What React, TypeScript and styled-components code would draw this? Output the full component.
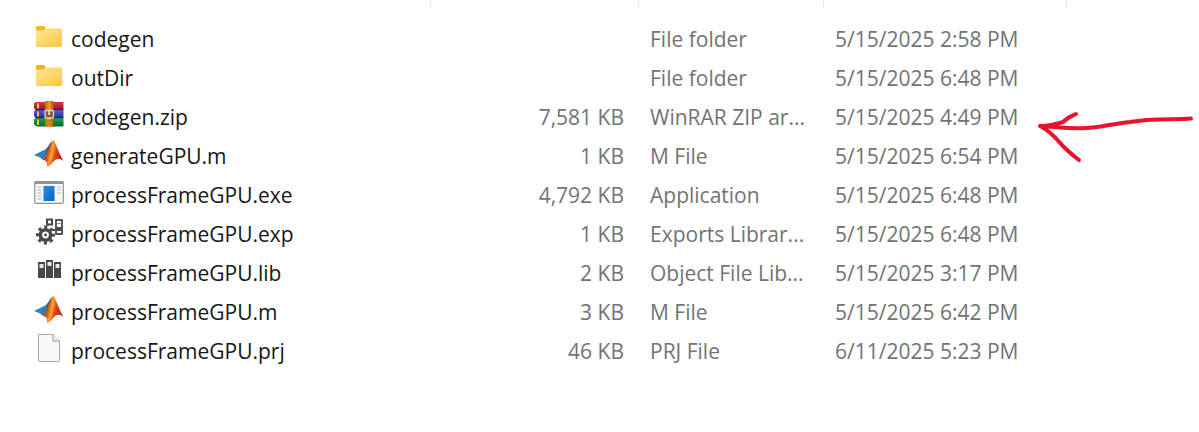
import React from "react";
import styled, { createGlobalStyle } from "styled-components";

const GlobalStyle = createGlobalStyle`
  body {
    margin: 0;
    background: #ffffff;
    font-family: "Open Sans", "Noto Sans", sans-serif;
  }
`;

const Pane = styled.main`
  position: relative;
  padding-bottom: 60px;
  overflow: hidden;
`;

const FileTable = styled.table`
  width: 100%;
  border-collapse: separate;
  border-spacing: 0;
  table-layout: fixed;
  font-size: 21px;
  line-height: 30px;
`;

const Column = styled.col<{ $width?: string }>`
  width: ${(p) => p.$width ?? "auto"};
`;

const HeaderCell = styled.th`
  height: 8px;
  padding: 0;
  border-right: 1px solid #e8e8e8;

  &:last-child {
    border-right: none;
  }
`;

const Body = styled.tbody`
  &::before {
    content: "";
    display: block;
    height: 11px;
  }
`;

const Cell = styled.td<{ $align?: "left" | "right" }>`
  height: 39px;
  padding: 0 15px 0 11px;
  color: #737373;
  text-align: ${(p) => p.$align ?? "left"};
  white-space: nowrap;
`;

const NameCell = styled(Cell)`
  padding-left: 34px;
  color: #161616;
`;

const FileName = styled.div`
  display: flex;
  align-items: center;
  gap: 7px;
`;

const Icon = styled.svg`
  flex: none;
  width: 30px;
  height: 30px;
  margin-bottom: 6px;
`;

const Annotation = styled.svg`
  position: absolute;
  top: 104px;
  left: 1032px;
  width: 167px;
  height: 64px;
  pointer-events: none;
`;

const FolderIcon = () => (
  <Icon viewBox="0 0 30 30" aria-hidden="true">
    <defs>
      <linearGradient id="folder" x1="0" y1="0" x2="1" y2="1">
        <stop offset="0" stopColor="#ffe79b" />
        <stop offset="1" stopColor="#fdc638" />
      </linearGradient>
    </defs>
    <path d="M2 9V6.500Q2 5 3.500 5H9.500Q11 5 11.500 7V10H2Z" fill="#f5b517" />
    <path d="M2 9.500H9L11.500 7.500H26.500Q28 7.500 28 9V24Q28 25.500 26.500 25.500H3.500Q2 25.500 2 24Z" fill="url(#folder)" />
    <path d="M2.500 25.300H27.500" stroke="#eebc45" strokeWidth="0.800" />
  </Icon>
);

const ArchiveIcon = () => (
  <Icon viewBox="0 0 30 30" aria-hidden="true">
    <defs>
      <linearGradient id="redBook" x1="0" y1="0" x2="0" y2="1">
        <stop offset="0" stopColor="#e0355a" />
        <stop offset="1" stopColor="#8d1230" />
      </linearGradient>
      <linearGradient id="blueBook" x1="0" y1="0" x2="0" y2="1">
        <stop offset="0" stopColor="#555fe0" />
        <stop offset="1" stopColor="#252b89" />
      </linearGradient>
      <linearGradient id="greenBook" x1="0" y1="0" x2="0" y2="1">
        <stop offset="0" stopColor="#20a650" />
        <stop offset="1" stopColor="#08632d" />
      </linearGradient>
      <linearGradient id="strap" x1="0" y1="0" x2="1" y2="0">
        <stop offset="0" stopColor="#b96710" />
        <stop offset="0.500" stopColor="#ed9d2b" />
        <stop offset="1" stopColor="#ad5b0e" />
      </linearGradient>
    </defs>
    <path d="M2 3H29.500V11H2L0 9V4Z" fill="url(#redBook)" />
    <path d="M2 11H29.500V19H2L0 17V12Z" fill="url(#blueBook)" />
    <path d="M2 19H29.500V27.500H3L0 25.500V20Z" fill="url(#greenBook)" />
    <path d="M1 10.700H29M1 18.700H29" stroke="#2b1735" strokeWidth="0.800" />
    <path d="M4 4.500V9.500M4 12.500V17.500M4 20.500V26" stroke="#f1c32f" strokeWidth="2" />
    <rect x="11" y="2" width="8.500" height="26" fill="url(#strap)" />
    <rect x="11" y="11.500" width="8.500" height="7.500" rx="1" fill="#8a5a35" stroke="#ddd6d1" strokeWidth="1.300" />
    <path d="M15.200 11V16" stroke="#f5ead8" strokeWidth="1.600" />
    <path d="M13.500 22H17M13.500 25H17" stroke="#855012" strokeWidth="0.800" />
  </Icon>
);

const MatlabIcon = () => (
  <Icon viewBox="0 0 30 30" aria-hidden="true">
    <defs>
      <linearGradient id="peak" x1="0" y1="0" x2="1" y2="0.300">
        <stop offset="0" stopColor="#641f19" />
        <stop offset="0.350" stopColor="#d84b17" />
        <stop offset="0.520" stopColor="#f6a12e" />
        <stop offset="0.680" stopColor="#df4c1b" />
        <stop offset="1" stopColor="#ac2419" />
      </linearGradient>
      <linearGradient id="slope" x1="0" y1="0" x2="1" y2="0">
        <stop offset="0" stopColor="#3a83b5" />
        <stop offset="0.600" stopColor="#3c7cae" />
        <stop offset="1" stopColor="#28354c" />
      </linearGradient>
    </defs>
    <path d="M0 17L9 12.500C13 12 15 6 18 3L14 19L9 22L6 19.500Z" fill="url(#slope)" />
    <path d="M9 22C13 19 14 9 19 2C21 2 23 11 29.500 23C26 20 23 20 20 23C18 25 16 28 13 29C14 25 12 22 9 22Z" fill="url(#peak)" />
    <path d="M19 2C17 10 18 20 13 28C19 23 21 12 19 2Z" fill="#f6a42c" fillOpacity="0.700" />
  </Icon>
);

const ApplicationIcon = () => (
  <Icon viewBox="0 0 30 30" aria-hidden="true">
    <defs>
      <linearGradient id="window" x1="0" y1="0" x2="1" y2="1">
        <stop offset="0" stopColor="#2490e5" />
        <stop offset="1" stopColor="#0866c1" />
      </linearGradient>
    </defs>
    <rect x="0.700" y="4.700" width="28.600" height="21.600" rx="1" fill="#f7f7f7" stroke="#8f9497" strokeWidth="1.200" />
    <path d="M1 6H29" stroke="#8f9497" strokeWidth="2" />
    <rect x="9.500" y="9" width="11" height="15" fill="url(#window)" />
    <path d="M3.500 10H7M3.500 13H7M3.500 16H7M3.500 19H7M3.500 22H7M23 10H27M23 13H27M23 16H27" stroke="#b3b5b8" strokeWidth="1.200" />
  </Icon>
);

const ExportsIcon = () => (
  <Icon viewBox="0 0 30 30" aria-hidden="true">
    <g fill="none" stroke="#484848">
      <circle cx="11.500" cy="19" r="5.200" strokeWidth="3.600" />
      <circle cx="11.500" cy="19" r="8" strokeWidth="3" strokeDasharray="3.140 3.143" strokeDashoffset="1.570" />
      <rect x="13" y="3.500" width="5" height="5" strokeWidth="2" />
      <rect x="22" y="4" width="6" height="14" strokeWidth="1.800" />
      <path d="M12 8.500H15M18.500 14H21" strokeWidth="1.800" />
    </g>
    <circle cx="11.500" cy="19" r="1.400" fill="#484848" />
    <rect x="22.500" y="11" width="5" height="4" fill="#484848" />
    <path d="M23.500 7.500H26.500" stroke="#777777" strokeWidth="1" />
  </Icon>
);

const LibraryIcon = () => (
  <Icon viewBox="0 0 30 30" aria-hidden="true">
    <g fill="#484848">
      <rect x="4" y="7" width="7" height="16" />
      <rect x="12" y="5" width="7" height="18" />
      <rect x="20" y="7" width="7" height="16" />
    </g>
    <g fill="#e6e6e6">
      <rect x="5.500" y="9" width="4" height="4" />
      <rect x="13.500" y="7" width="4" height="4" />
      <rect x="21.500" y="9" width="4" height="4" />
    </g>
  </Icon>
);

const DocumentIcon = () => (
  <Icon viewBox="0 0 30 30" aria-hidden="true">
    <path d="M4.500 1.500H19L25.500 8V27Q25.500 28.500 24 28.500H6Q4.500 28.500 4.500 27Z" fill="#f8f8f8" stroke="#aaaaaa" strokeWidth="1" />
    <path d="M19 1.500V8H25.500" fill="#eeeeee" stroke="#999999" strokeWidth="1" />
  </Icon>
);

interface FileEntry {
  name: string;
  size: string;
  type: string;
  modified: string;
  icon: React.ComponentType;
}

const files: FileEntry[] = [
  { name: "codegen", size: "", type: "File folder", modified: "5/15/2025 2:58 PM", icon: FolderIcon },
  { name: "outDir", size: "", type: "File folder", modified: "5/15/2025 6:48 PM", icon: FolderIcon },
  { name: "codegen.zip", size: "7,581 KB", type: "WinRAR ZIP ar...", modified: "5/15/2025 4:49 PM", icon: ArchiveIcon },
  { name: "generateGPU.m", size: "1 KB", type: "M File", modified: "5/15/2025 6:54 PM", icon: MatlabIcon },
  { name: "processFrameGPU.exe", size: "4,792 KB", type: "Application", modified: "5/15/2025 6:48 PM", icon: ApplicationIcon },
  { name: "processFrameGPU.exp", size: "1 KB", type: "Exports Librar...", modified: "5/15/2025 6:48 PM", icon: ExportsIcon },
  { name: "processFrameGPU.lib", size: "2 KB", type: "Object File Lib...", modified: "5/15/2025 3:17 PM", icon: LibraryIcon },
  { name: "processFrameGPU.m", size: "3 KB", type: "M File", modified: "5/15/2025 6:42 PM", icon: MatlabIcon },
  { name: "processFrameGPU.prj", size: "46 KB", type: "PRJ File", modified: "6/11/2025 5:23 PM", icon: DocumentIcon },
];

export default function App() {
  return (
    <>
      <GlobalStyle />
      <Pane>
        <FileTable>
          <colgroup>
            <Column $width="431px" />
            <Column $width="208px" />
            <Column $width="185px" />
            <Column $width="243px" />
            <Column />
          </colgroup>
          <thead>
            <tr>
              <HeaderCell />
              <HeaderCell />
              <HeaderCell />
              <HeaderCell />
              <HeaderCell />
            </tr>
          </thead>
          <Body>
            {files.map(({ name, size, type, modified, icon: FileIcon }) => (
              <tr key={name}>
                <NameCell>
                  <FileName>
                    <FileIcon />
                    {name}
                  </FileName>
                </NameCell>
                <Cell $align="right">{size}</Cell>
                <Cell>{type}</Cell>
                <Cell>{modified}</Cell>
                <Cell />
              </tr>
            ))}
          </Body>
        </FileTable>
        <Annotation viewBox="0 0 167 64" aria-hidden="true">
          <path
            d="M159 14.500C145 16 120 14 98 18C79 20 66 24 54 24C38 25 25 23 8 22C19 22 25 20 31 18C36 13 39 12 44 10M8 22C22 29 28 40 34 45C38 49 42 52 47 56"
            fill="none"
            stroke="#e7152b"
            strokeWidth="4"
            strokeLinecap="round"
            strokeLinejoin="round"
          />
        </Annotation>
      </Pane>
    </>
  );
}
